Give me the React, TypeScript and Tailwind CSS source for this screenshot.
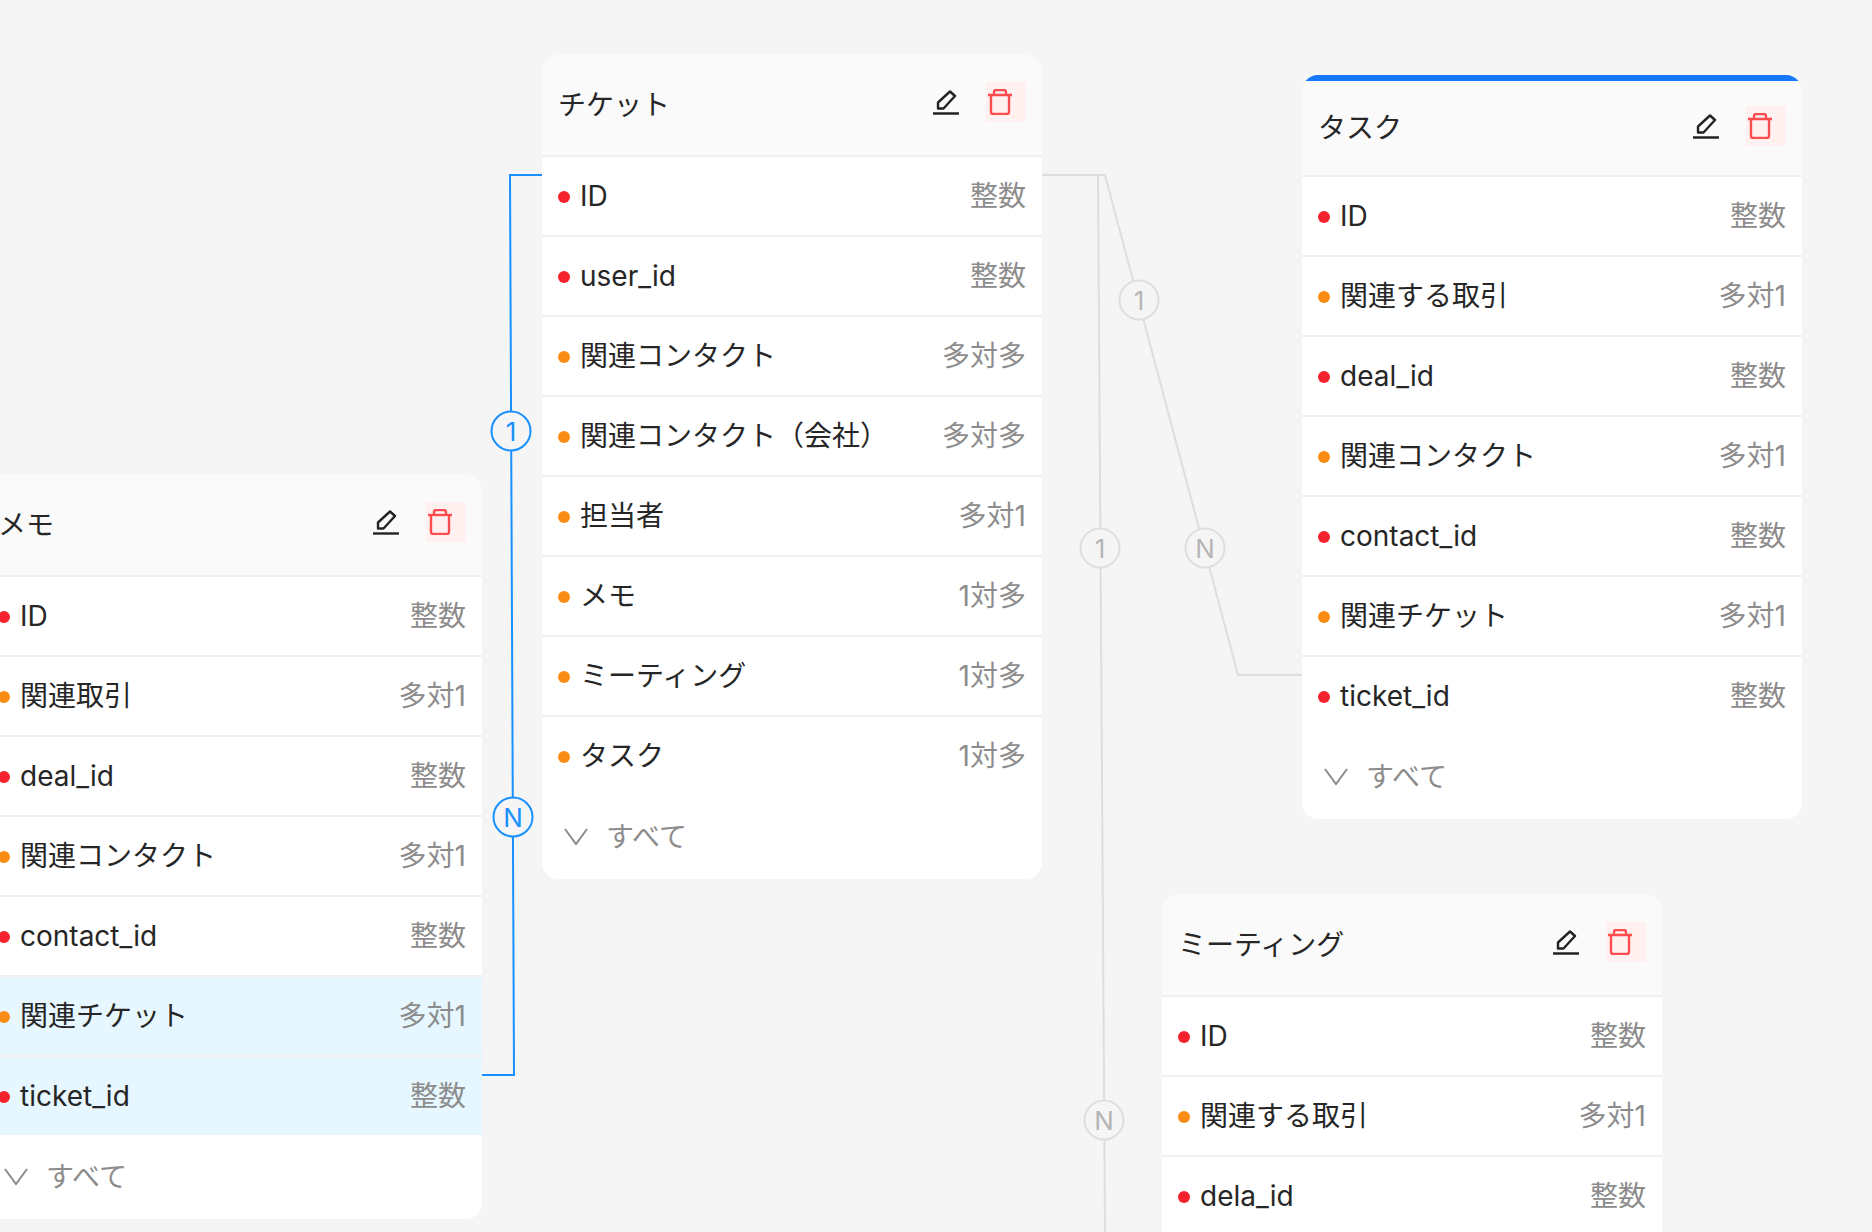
type Field = { name: string; type: string; rel?: boolean; active?: boolean }

const I = (name: string, type = "整数"): Field => ({ name, type })
const R = (name: string, type: string, active = false): Field => ({ name, type, rel: true, active })

function PencilIcon() {
  return (
    <svg width="26" height="25" viewBox="0 0 26 25" fill="none" stroke="#222" strokeWidth="2.4">
      <path d="M5 18.500v-6L17 1.500l5 4.500L10.500 18.500z" strokeLinejoin="round" />
      <path d="M0 23.500h26" />
    </svg>
  )
}

function TrashIcon() {
  return (
    <svg width="24" height="26" viewBox="0 0 24 26" fill="none" stroke="#ff4d4f" strokeWidth="2.4">
      <path d="M0 6h24" />
      <path d="M6 6V3a2 2 0 0 1 2-2h8a2 2 0 0 1 2 2v3" />
      <path d="M3 6v17a2 2 0 0 0 2 2h14a2 2 0 0 0 2-2V6" />
    </svg>
  )
}

function Chevron() {
  return (
    <svg width="24" height="18" viewBox="0 0 24 18" fill="none" stroke="#8c8c8c" strokeWidth="2">
      <path d="M1 1l11 15L23 1" />
    </svg>
  )
}

function Row({ f, last }: { f: Field; last: boolean }) {
  return (
    <div
      className={
        "flex items-center justify-between pl-4 pr-4 " +
        (last ? "h-[78px] " : "h-[80px] border-b-2 border-[#f0f0f0] ") +
        (f.active ? "bg-[#e6f7ff]" : "bg-white")
      }
    >
      <div className="flex items-center gap-[10px]">
        <span className={"mt-px size-3 rounded-full " + (f.rel ? "bg-[#fa8c16]" : "bg-[#f5222d]")} />
        <span className="text-[#262626]">{f.name}</span>
      </div>
      <span className="text-[#8c8c8c]">{f.type}</span>
    </div>
  )
}

function TableCard({
  title,
  fields,
  pos,
  selected,
  footer = true,
}: {
  title: string
  fields: Field[]
  pos: string
  selected?: boolean
  footer?: boolean
}) {
  return (
    <div className={"absolute w-[500px] overflow-hidden rounded-2xl bg-white " + (footer ? "" : "pb-10 ") + pos}>
      {selected && <div className="absolute inset-x-0 top-0 h-[6px] rounded-t-2xl bg-[#1677ff]" />}
      <div
        className={
          "flex h-[102px] items-start justify-between border-b-2 border-[#f0f0f0] bg-[#fafafa] pl-4 pr-4 " +
          (selected ? "pt-[31px]" : "pt-[27px]")
        }
      >
        <span className={"leading-[42px] text-[#262626] " + (selected ? "mt-px" : "mt-[2px]")}>{title}</span>
        <div className="flex items-start">
          <span className="mr-[27px] mt-[8px]"><PencilIcon /></span>
          <span className="h-10 w-10 bg-[#fff1f0] pl-[2px] pt-[7px]"><TrashIcon /></span>
        </div>
      </div>
      {fields.map((f, i) => (
        <Row key={f.name} f={f} last={i === fields.length - 1} />
      ))}
      {footer && (
        <div className="flex h-[84px] items-center gap-[18px] pl-[22px] text-[#8c8c8c]">
          <Chevron />
          <span>すべて</span>
        </div>
      )}
    </div>
  )
}

function Badge({ label, pos, active }: { label: string; pos: string; active?: boolean }) {
  return (
    <div
      className={
        "absolute flex size-[41px] -translate-x-1/2 -translate-y-1/2 items-center justify-center rounded-full border-2 bg-[#f5f5f5] text-[26px] " +
        (active ? "border-[#1890ff] text-[#1890ff] " : "border-[#dedede] text-[#b5b5b5] ") +
        pos
      }
    >
      {label}
    </div>
  )
}

export default function App() {
  return (
    <div className="relative h-[1232px] w-[1872px] overflow-hidden bg-[#f5f5f5] font-['Inter','Noto_Sans_CJK_JP',sans-serif] text-[28px]">
      <svg className="absolute inset-0" width="1872" height="1232" fill="none">
        <path d="M1042 175H1105L1238 675H1302" stroke="#dedede" strokeWidth="2" />
        <path d="M1042 175H1098L1105 1232" stroke="#dedede" strokeWidth="2" />
        <path d="M542 175H510L514 1075H482" stroke="#1890ff" strokeWidth="2" />
      </svg>

      <Badge label="1" pos="left-[511px] top-[431px]" active />
      <Badge label="N" pos="left-[513px] top-[817px]" active />
      <Badge label="1" pos="left-[1139px] top-[300px]" />
      <Badge label="N" pos="left-[1205px] top-[548px]" />
      <Badge label="1" pos="left-[1100px] top-[548px]" />
      <Badge label="N" pos="left-[1104px] top-[1120px]" />

      <TableCard
        title="チケット"
        pos="left-[542px] top-[55px]"
        fields={[
          I("ID"),
          I("user_id"),
          R("関連コンタクト", "多対多"),
          R("関連コンタクト（会社）", "多対多"),
          R("担当者", "多対1"),
          R("メモ", "1対多"),
          R("ミーティング", "1対多"),
          R("タスク", "1対多"),
        ]}
      />
      <TableCard
        title="メモ"
        pos="left-[-18px] top-[475px]"
        fields={[
          I("ID"),
          R("関連取引", "多対1"),
          I("deal_id"),
          R("関連コンタクト", "多対1"),
          I("contact_id"),
          R("関連チケット", "多対1", true),
          { ...I("ticket_id"), active: true },
        ]}
      />
      <TableCard
        title="タスク"
        pos="left-[1302px] top-[75px]"
        selected
        fields={[
          I("ID"),
          R("関連する取引", "多対1"),
          I("deal_id"),
          R("関連コンタクト", "多対1"),
          I("contact_id"),
          R("関連チケット", "多対1"),
          I("ticket_id"),
        ]}
      />
      <TableCard
        title="ミーティング"
        pos="left-[1162px] top-[895px]"
        footer={false}
        fields={[I("ID"), R("関連する取引", "多対1"), I("dela_id")]}
      />
    </div>
  )
}
